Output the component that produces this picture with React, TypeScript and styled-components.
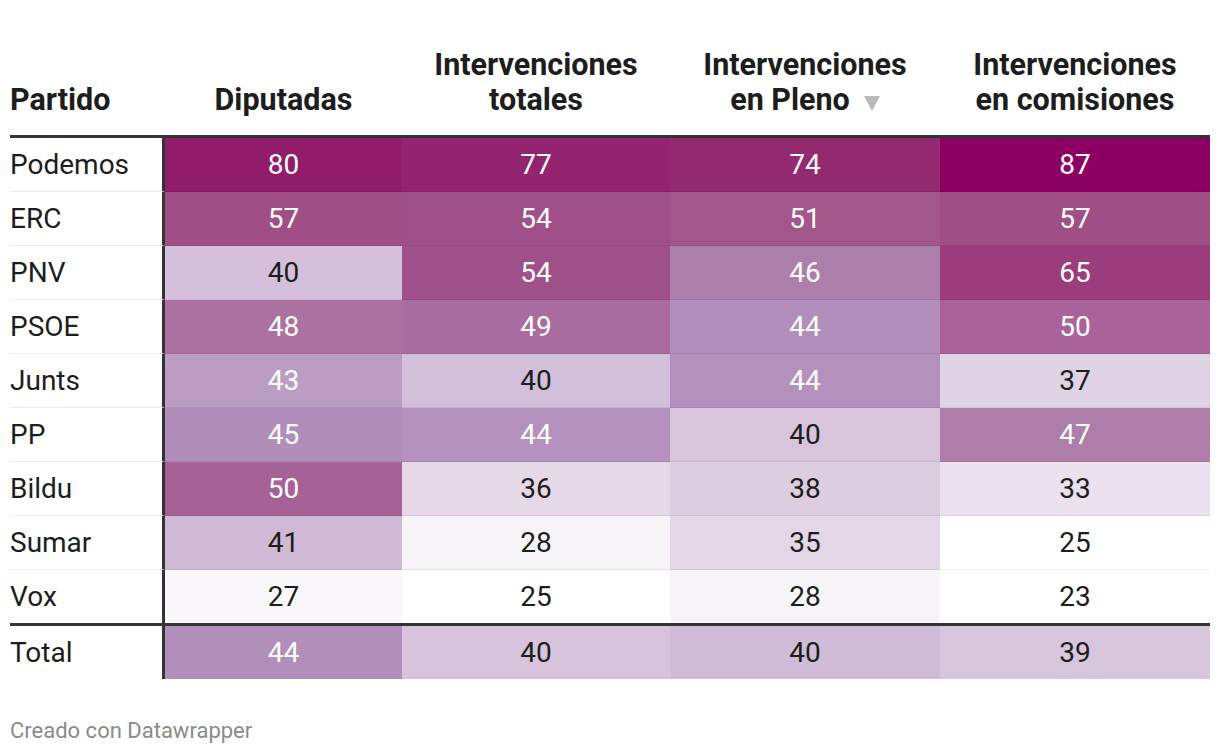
import React from "react";
import styled, { createGlobalStyle } from "styled-components";

const GlobalStyle = createGlobalStyle`
  html, body {
    margin: 0;
    padding: 0;
    background: #ffffff;
  }
  body {
    font-family: Roboto, "Liberation Sans", Arial, sans-serif;
    color: #1d1d1d;
  }
`;

const Wrapper = styled.div`
  width: 1200px;
  padding: 0 10px;
`;

const COLUMNS = "155px 237px 268px 270px 270px";

const HeaderRow = styled.div`
  display: grid;
  grid-template-columns: ${COLUMNS};
  align-items: end;
  padding-top: 47px;
  border-bottom: 3px solid #333333;
`;

const HeaderCell = styled.div<{ $left?: boolean }>`
  font-size: 30.5px;
  font-weight: 700;
  line-height: 35px;
  text-align: ${(p) => (p.$left ? "left" : "center")};
  padding-bottom: 18px;
  color: #1d1d1d;
`;

const SortArrow = styled.span`
  display: inline-block;
  margin-left: 14px;
  width: 0;
  height: 0;
  border-left: 8px solid transparent;
  border-right: 8px solid transparent;
  border-top: 15px solid #bababa;
  vertical-align: -1px;
`;

const Row = styled.div<{ $total?: boolean }>`
  display: grid;
  grid-template-columns: ${COLUMNS};
  border-top: ${(p) => (p.$total ? "3px solid #333333" : "none")};
`;

const NameCell = styled.div<{ $last?: boolean }>`
  box-sizing: border-box;
  height: ${(p) => (p.$last ? "53px" : "54px")};
  border-right: 3px solid #333333;
  border-bottom: ${(p) => (p.$last ? "none" : "1px solid #ececec")};
  display: flex;
  align-items: center;
  font-size: 28px;
  padding-bottom: ${(p) => (p.$last ? "0" : "1px")};
  color: #1d1d1d;
`;

const ValueCell = styled.div<{ $bg: string; $light: boolean; $last?: boolean }>`
  box-sizing: border-box;
  height: ${(p) => (p.$last ? "53px" : "54px")};
  background: ${(p) => p.$bg};
  border-bottom: ${(p) => (p.$last ? "none" : "1px solid rgba(0, 0, 0, 0.07)")};
  display: flex;
  align-items: center;
  justify-content: center;
  font-size: 28px;
  padding-bottom: ${(p) => (p.$last ? "0" : "1px")};
  color: ${(p) => (p.$light ? "#ffffff" : "#1d1d1d")};
`;

const Footer = styled.div`
  margin-top: 39px;
  font-size: 22px;
  line-height: 26px;
  color: #8a8a8a;
`;

type Cell = [number, string];

interface PartyRow {
  name: string;
  cells: Cell[];
}

const rows: PartyRow[] = [
  { name: "Podemos", cells: [[80, "#901c6a"], [77, "#922470"], [74, "#932a6f"], [87, "#8d0063"]] },
  { name: "ERC", cells: [[57, "#a04f86"], [54, "#a05088"], [51, "#a2578b"], [57, "#a04e86"]] },
  { name: "PNV", cells: [[40, "#d4c0da"], [54, "#a05088"], [46, "#ac7fab"], [65, "#9b3c7c"]] },
  { name: "PSOE", cells: [[48, "#aa71a1"], [49, "#a96c9e"], [44, "#b18ebb"], [50, "#a9639a"]] },
  { name: "Junts", cells: [[43, "#bb9dc4"], [40, "#d2c0da"], [44, "#b491bc"], [37, "#e0d3e5"]] },
  { name: "PP", cells: [[45, "#b18eb9"], [44, "#b491bc"], [40, "#d8c5dc"], [47, "#ae7daa"]] },
  { name: "Bildu", cells: [[50, "#a66296"], [36, "#e5d9e8"], [38, "#ddcde1"], [33, "#ebe0ed"]] },
  { name: "Sumar", cells: [[41, "#d0b9d5"], [28, "#f6f4f7"], [35, "#e3d7e7"], [25, "#ffffff"]] },
  { name: "Vox", cells: [[27, "#f9f7fa"], [25, "#ffffff"], [28, "#f6f4f7"], [23, "#ffffff"]] },
];

const total: Cell[] = [[44, "#b28fba"], [40, "#d7c3dc"], [40, "#d1bcd7"], [39, "#d8c6dd"]];

const isLight = (v: number) => v >= 43;

const App = () => {
  return (
    <>
      <GlobalStyle />
      <Wrapper>
        <HeaderRow>
          <HeaderCell $left>Partido</HeaderCell>
          <HeaderCell>Diputadas</HeaderCell>
          <HeaderCell>
            Intervenciones
            <br />
            totales
          </HeaderCell>
          <HeaderCell>
            Intervenciones
            <br />
            en Pleno<SortArrow />
          </HeaderCell>
          <HeaderCell>
            Intervenciones
            <br />
            en comisiones
          </HeaderCell>
        </HeaderRow>
        {rows.map((row, i) => {
          const last = i === rows.length - 1;
          return (
            <Row key={row.name}>
              <NameCell $last={last}>{row.name}</NameCell>
              {row.cells.map(([value, bg], j) => (
                <ValueCell key={j} $bg={bg} $light={isLight(value)} $last={last}>
                  {value}
                </ValueCell>
              ))}
            </Row>
          );
        })}
        <Row $total>
          <NameCell $last>Total</NameCell>
          {total.map(([value, bg], j) => (
            <ValueCell key={j} $bg={bg} $light={isLight(value)} $last>
              {value}
            </ValueCell>
          ))}
        </Row>
        <Footer>Creado con Datawrapper</Footer>
      </Wrapper>
    </>
  );
};

export default App;
